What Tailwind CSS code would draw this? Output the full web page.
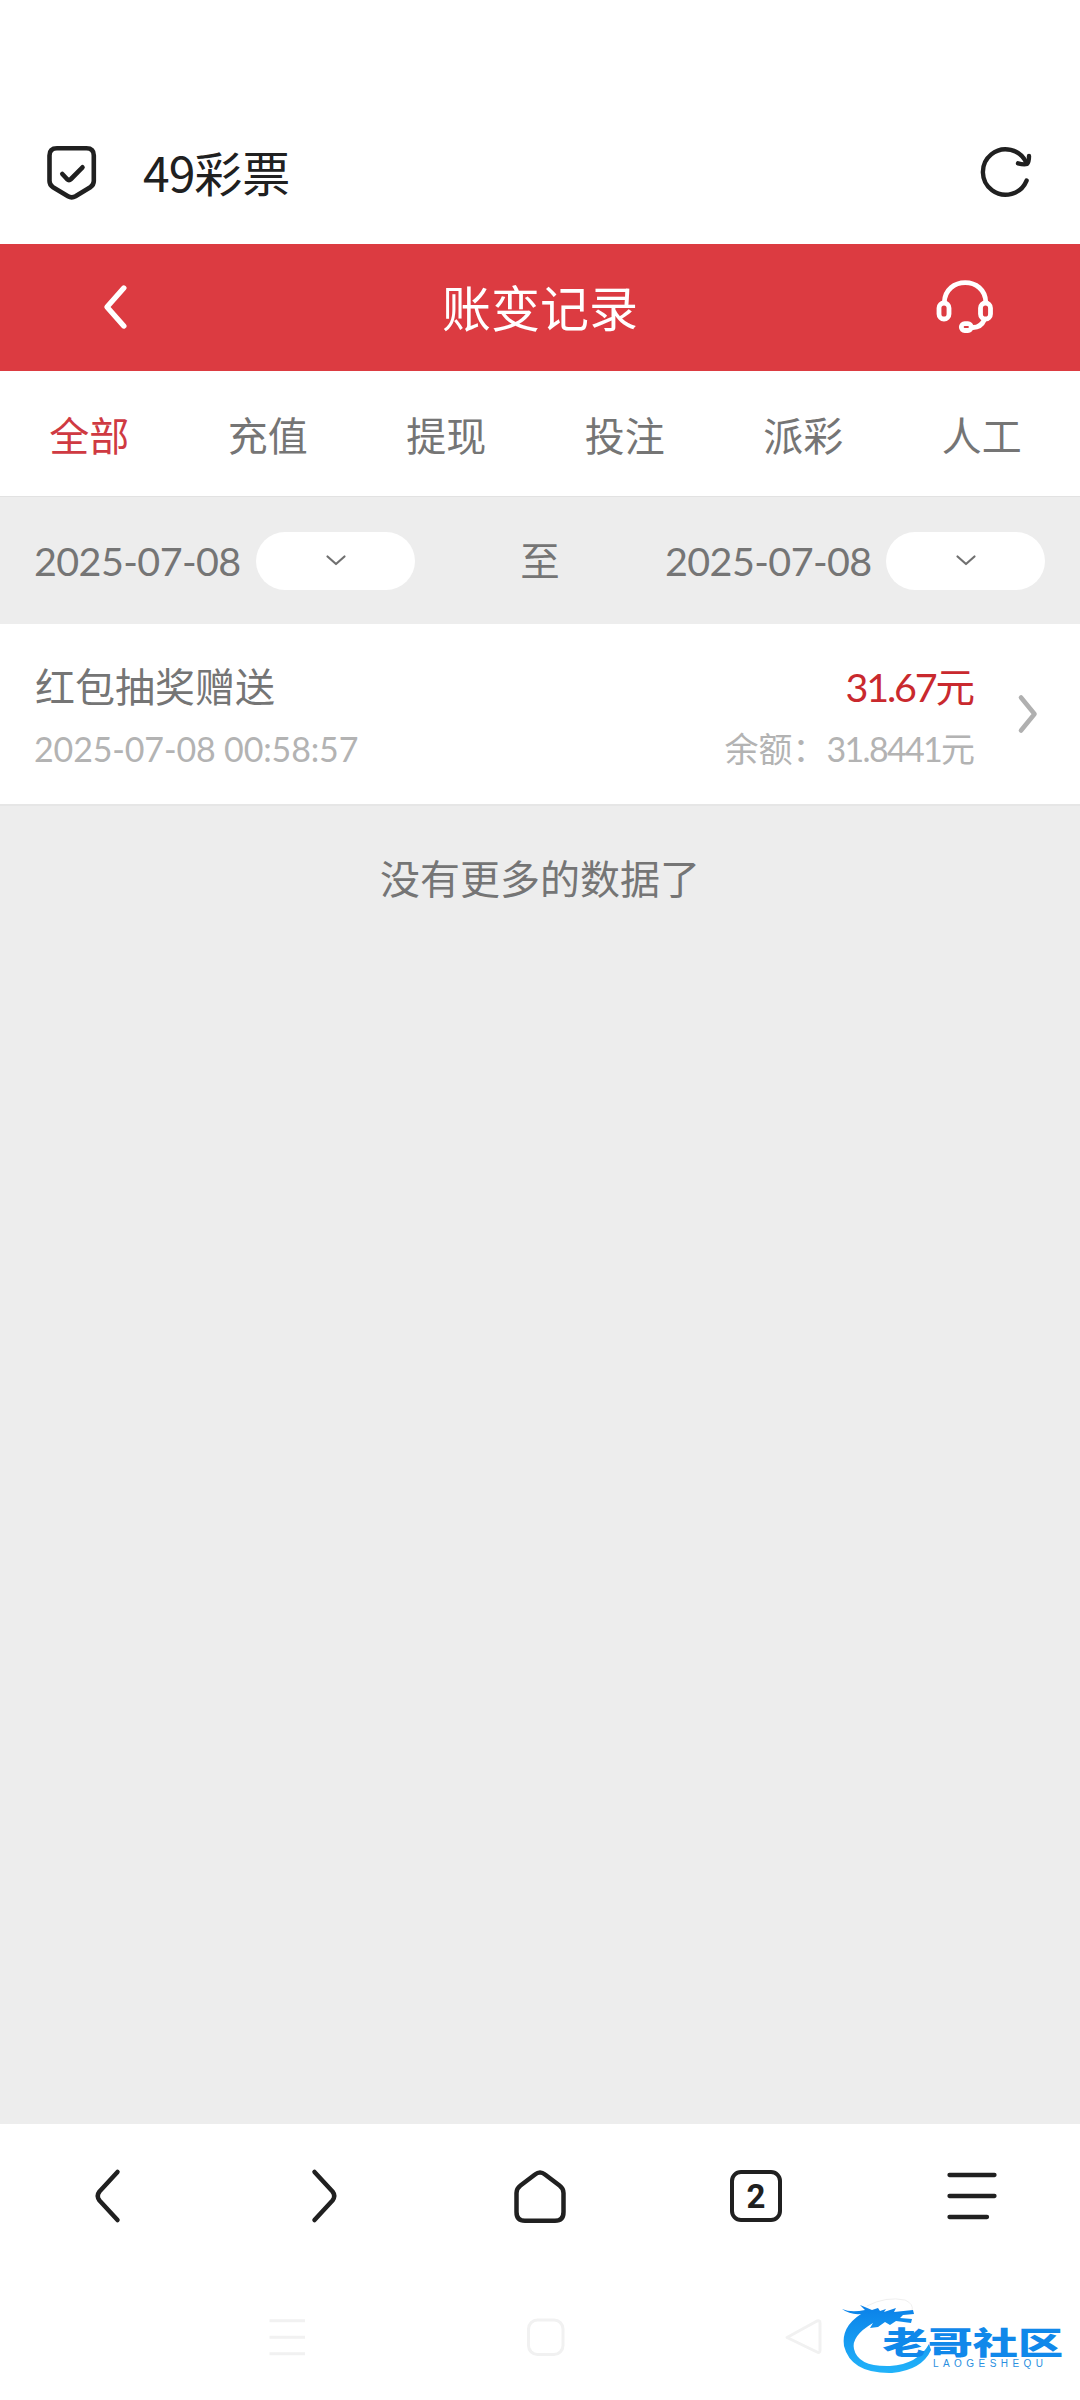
<!DOCTYPE html>
<html lang="zh-CN">
<head>
<meta charset="utf-8">
<title>账变记录</title>
<script src="https://cdn.jsdelivr.net/npm/@tailwindcss/browser@4"></script>
</head>
<body class="w-[1080px] h-[2400px] overflow-hidden bg-white flex flex-col font-[Lato,'Noto_Sans_CJK_SC',sans-serif] text-[#757575]">
  <!-- browser title bar -->
  <header class="h-[244px] pt-[102px] px-[44px] flex items-center shrink-0 text-[#202020]">
    <svg class="w-[56px] h-[60px]" viewBox="44 143 56 60" fill="none" stroke="currentColor" stroke-width="4.6" stroke-linecap="round" stroke-linejoin="round"><path d="M57 148.300H86.500Q93.800 148.300 93.800 155.500V181Q93.800 185 90.300 187.200L75.500 196.300Q71.700 198.500 68 196.300L53 187.200Q49.500 185 49.500 181V155.500Q49.500 148.300 57 148.300Z"/><path d="M62.300 174L67 179Q69 181 71 179L82.500 167.300"/></svg>
    <h2 class="ml-[43px] -mt-[5px] text-[48px] leading-[60px] font-['Noto_Sans_CJK_SC',sans-serif]"><span class="tracking-[-1px]">49</span>彩票</h2>
    <svg class="ml-auto w-[56px] h-[60px]" viewBox="980 143 56 60" fill="none" stroke="currentColor" stroke-width="4.4" stroke-linecap="round" stroke-linejoin="round"><path d="M1026.600 180.600A22.700 22.700 0 1 1 1026.200 162.500"/><path d="M1018 163.300Q1024 165 1027 164Q1029 162 1029 156"/></svg>
  </header>

  <!-- page header -->
  <div class="h-[127px] shrink-0 bg-[#dc3b41] text-white flex items-center justify-between px-[84px]">
    <svg class="w-[60px] h-[60px]" viewBox="84 277.500 60 60" fill="none" stroke="currentColor" stroke-width="5.4" stroke-linecap="round" stroke-linejoin="round"><path d="M123.800 287.500L107 306.500L123.800 325.500"/></svg>
    <h1 class="text-[49px] leading-[60px]">账变记录</h1>
    <svg class="w-[60px] h-[60px]" viewBox="936 277.500 60 60" fill="none" stroke="currentColor" stroke-width="4.8" stroke-linecap="round"><path d="M944.300 302C945 275.500 985.500 275.500 985.800 302"/><rect x="939" y="302.500" width="10" height="16" rx="5"/><rect x="980.500" y="302.500" width="10" height="16" rx="5"/><path d="M984.500 319Q981 327 973 327"/><rect x="961.300" y="323.200" width="10" height="6.800" rx="3.400"/></svg>
  </div>

  <!-- record type tabs -->
  <nav class="h-[125px] shrink-0 w-[1071px] grid grid-cols-6 items-center text-center text-[40px] leading-[60px] pt-[4px]">
    <span class="text-[#cf3a42]">全部</span><span>充值</span><span>提现</span><span>投注</span><span>派彩</span><span>人工</span>
  </nav>

  <main class="h-[1628px] shrink-0 bg-[#ededed] border-t border-[#e2e2e2]">
    <!-- date range -->
    <div class="h-[127px] px-[35px] pt-px flex items-center justify-between text-[39.500px]">
      <div class="flex items-center w-[380px] justify-between"><span class="-ml-px tracking-[-0.600px]">2025-07-08</span>
        <span class="w-[159px] h-[58px] rounded-full bg-white flex items-center justify-center"><svg class="w-[22px] h-[14px]" viewBox="0 0 22 14" fill="none" stroke="#707070" stroke-width="2.2" stroke-linecap="round" stroke-linejoin="round"><path d="M2.500 2.500L11 10L19.500 2.500"/></svg></span></div>
      <span class="leading-[60px]">至</span>
      <div class="flex items-center w-[380px] justify-between"><span class="tracking-[-0.600px]">2025-07-08</span>
        <span class="w-[159px] h-[58px] rounded-full bg-white flex items-center justify-center"><svg class="w-[22px] h-[14px]" viewBox="0 0 22 14" fill="none" stroke="#707070" stroke-width="2.2" stroke-linecap="round" stroke-linejoin="round"><path d="M2.500 2.500L11 10L19.500 2.500"/></svg></span></div>
    </div>

    <!-- record -->
    <div class="h-[182px] bg-white border-b-2 border-[#e6e6e6] flex items-center px-[35px]">
      <div class="flex-1 pt-[8px]">
        <p class="text-[40px] leading-[62px]">红包抽奖赠送</p>
        <p class="-ml-px text-[34px] leading-[62px] text-[#b3b3b3] tracking-[-0.150px]">2025-07-08 00:58:57</p>
      </div>
      <div class="text-right pt-[8px]">
        <p class="text-[39.500px] leading-[62px] text-[#c9292e]"><span class="tracking-[-2.200px]">31.67</span>元</p>
        <p class="text-[34px] leading-[62px] text-[#b3b3b3]">余额：<span class="tracking-[-1.700px]">31.8441</span>元</p>
      </div>
      <svg class="ml-[36px] w-[34px] h-[60px]" viewBox="1011 684 34 60" fill="none" stroke="#b0b0b0" stroke-width="4.600" stroke-linecap="round" stroke-linejoin="round"><path d="M1021 697.500L1034.500 714L1021 730.500"/></svg>
    </div>

    <p class="mt-[43px] text-center text-[40px] leading-[60px]">没有更多的数据了</p>
  </main>

  <!-- browser toolbar -->
  <footer class="h-[144px] shrink-0 grid grid-cols-5 items-center justify-items-center text-[#202020]">
    <svg class="w-[60px] h-[60px]" viewBox="-30 -30 60 60" fill="none" stroke="currentColor" stroke-width="4.500" stroke-linecap="round" stroke-linejoin="round"><path d="M9.500 -24L-8.500 -4.500Q-12 0 -8.500 4.500L9.500 24"/></svg>
    <svg class="w-[60px] h-[60px]" viewBox="-30 -30 60 60" fill="none" stroke="currentColor" stroke-width="4.500" stroke-linecap="round" stroke-linejoin="round"><path d="M-9.500 -24L8.500 -4.500Q12 0 8.500 4.500L-9.500 24"/></svg>
    <svg class="w-[60px] h-[60px]" viewBox="-30 -30 60 60" fill="none" stroke="currentColor" stroke-width="4.500" stroke-linejoin="round"><path d="M-5 -21.500Q0 -25.500 5 -21.500L19.500 -10.500Q23.500 -7.500 23.500 -3V16Q23.500 24.800 15 24.800H-15Q-23.500 24.800 -23.500 16V-3Q-23.500 -7.500 -19.500 -10.500Z"/></svg>
    <span class="w-[52px] h-[52px] rounded-[11px] border-4 border-current flex items-center justify-center font-[Roboto,sans-serif] font-bold text-[33px] leading-none">2</span>
    <svg class="w-[60px] h-[60px]" viewBox="-30 -30 60 60" fill="none" stroke="currentColor" stroke-width="4.300" stroke-linecap="round"><path d="M-22.500 -21H22.500M-22.500 0H22.500M-22.500 21H15"/></svg>
  </footer>

  <!-- system navigation and site mark -->
  <div class="flex-1">
    <svg class="block w-[1080px] h-[132px]" viewBox="0 2268 1080 132">
      <defs><linearGradient id="b" x1="0" y1="2305" x2="0" y2="2374" gradientUnits="userSpaceOnUse"><stop stop-color="#0a80e8"/><stop offset="1" stop-color="#22b4fa"/></linearGradient>
      <linearGradient id="t" x1="0" y1="2328" x2="0" y2="2357" gradientUnits="userSpaceOnUse"><stop stop-color="#0a78dc"/><stop offset="1" stop-color="#1faaf7"/></linearGradient></defs>
      <g fill="none" stroke="#f1f1f1" stroke-width="3"><path d="M269.500 2320.700H305M269.500 2337.300H305M269.500 2353.700H305"/><rect x="528.500" y="2320" width="34.500" height="34.500" rx="9"/><path d="M787 2337.500L817 2321Q820 2320 820 2323V2350Q820 2353.500 817 2352Z" stroke-linejoin="round"/></g>
      <path fill="none" stroke="#efefef" stroke-width="1" d="M867 2306Q886 2296 905 2300Q914 2304 912 2311"/>
      <path fill="url(#b)" d="M842 2309Q851 2313 865 2310L860 2305L872 2310L878 2308L880 2311L886 2309L884 2312L896 2308L894 2312L913 2310L914 2314L903 2315L900 2318L912 2319L911 2323L896 2321L890 2325L885 2322L878 2327L870 2328L873 2323Q851 2336 854 2349Q858 2367 890 2366Q918 2364 929 2344L931 2350Q922 2370 892 2373Q851 2374 844 2346Q841 2327 861 2314Q850 2315 842 2309Z"/>
      <text transform="translate(882.500 2353.500) scale(1.480 1)" font-family="Noto Sans CJK SC, sans-serif" font-weight="900" font-size="30.500" fill="#1088ea">老哥社区</text>
      <text x="933" y="2366.500" font-family="Liberation Sans, sans-serif" font-size="10" textLength="110" fill="#2a8fe0">LAOGESHEQU</text>
    </svg>
  </div>
</body>
</html>
